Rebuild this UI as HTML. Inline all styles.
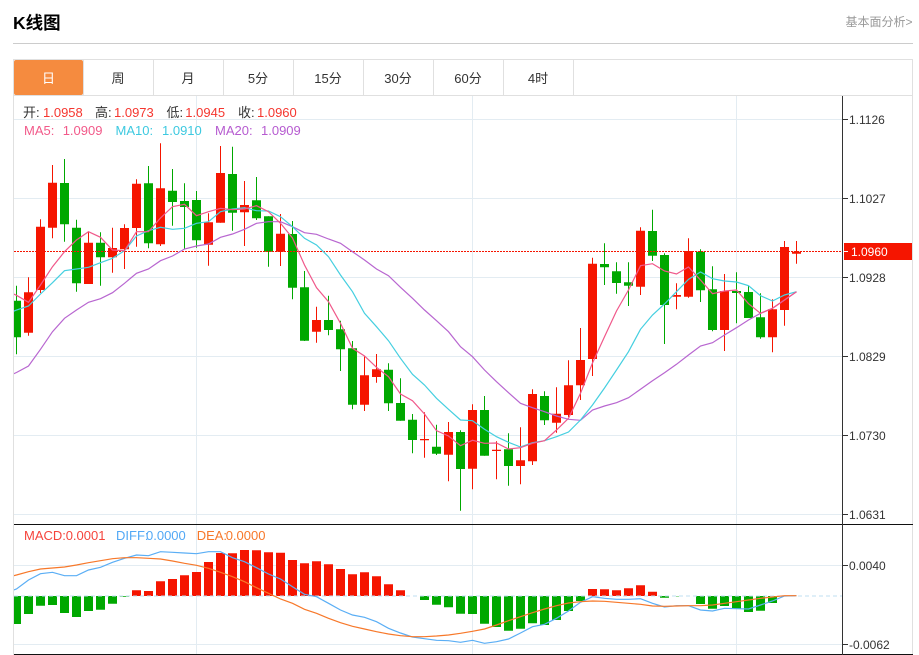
<!DOCTYPE html>
<html lang="zh">
<head>
<meta charset="utf-8">
<title>K线图</title>
<style>
html,body{margin:0;padding:0;background:#fff;width:919px;height:655px;overflow:hidden}
svg{display:block;position:absolute;left:0;top:0}
text{font-family:"Liberation Sans","Noto Sans CJK SC",sans-serif;white-space:pre}
</style>
</head>
<body>
<svg width="919" height="655" viewBox="0 0 919 655" xmlns="http://www.w3.org/2000/svg">
<defs>
<clipPath id="c"><rect x="14" y="96" width="828" height="428"/></clipPath>
<clipPath id="m"><rect x="14" y="525" width="828" height="129"/></clipPath>
</defs>
<!-- header -->
<text x="13" y="29" font-size="17.5" font-weight="700" fill="#000">K线图</text>
<text x="845.5" y="26" font-size="12" fill="#999">基本面分析&gt;</text>
<path d="M13 43.5H913" stroke="#ccc" fill="none"/>
<!-- frame + tabs -->
<path d="M13.5 655V59.5H912.5V655M13.5 95.5H912.5" stroke="#e0e0e0" fill="none"/>
<path d="M83.5 60V95M153.5 60V95M223.5 60V95M293.5 60V95M363.5 60V95M433.5 60V95M503.5 60V95M573.5 60V95" stroke="#e0e0e0" fill="none"/>
<rect x="14" y="60" width="69" height="35" rx="2" fill="#f58b3f"/>
<g font-size="13" fill="#333" text-anchor="middle">
<text x="48.5" y="83" fill="#fff">日</text>
<text x="118" y="83">周</text>
<text x="188" y="83">月</text>
<text x="258" y="83">5分</text>
<text x="328" y="83">15分</text>
<text x="398" y="83">30分</text>
<text x="468" y="83">60分</text>
<text x="538" y="83">4时</text>
</g>
<!-- grid -->
<path d="M14 119.5H842M14 198.5H842M14 277.5H842M14 356.5H842M14 435.5H842M14 514.5H842M14 565.5H842M14 644.5H842M196.5 96V654M472.5 96V654M736.5 96V654" stroke="#e3ecf2" fill="none"/>
<!-- candles -->
<g clip-path="url(#c)">
<path stroke="#00a800" fill="none" d="M16.5 285.7V354.3M64.5 159V241.7M76.5 219.7V291.7M100.5 232.3V285.7M148.5 166V248.3M172.5 169V225.7M184.5 183.3V249.3M196.5 191V247.7M232.5 146.7V230.7M256.5 177V220M268.5 216.3V266.7M292.5 221V299.3M304.5 271V341M328.5 295.7V335.3M340.5 320.7V371M352.5 341V409.3M388.5 363.3V411M400.5 378.3V420.7M412.5 414V453.3M436.5 424.7V455M460.5 430.3V510.7M484.5 396V455.7M508.5 433.3V485.7M544.5 391.3V425M604.5 243.3V285M616.5 262.3V293.7M628.5 262.3V306M652.5 209.7V261M664.5 253.3V344M700.5 249.3V302M712.5 266.3V331.3M736.5 272.3V323.3M748.5 286V318M760.5 293.3V338.7"/>
<path fill="#00a800" d="M12 300.7H21V337.3H12zM60 183H69V224.3H60zM72 227.7H81V283.3H72zM96 242.7H105V257.3H96zM144 183.3H153V243.3H144zM168 190.7H177V202H168zM180 201H189V207H180zM192 200H201V240.3H192zM228 174H237V212.7H228zM252 200.3H261V218.3H252zM264 216.3H273V251.7H264zM288 234H297V287.7H288zM300 287.3H309V340.7H300zM324 320H333V330H324zM336 329.3H345V349.3H336zM348 348.3H357V404.7H348zM384 369.7H393V403.3H384zM396 403H405V420.7H396zM408 419.7H417V440H408zM432 446.7H441V453.7H432zM456 432H465V469H456zM480 410H489V455.7H480zM504 449.3H513V466H504zM540 396H549V420.3H540zM600 264H609V267.3H600zM612 271.3H621V283H612zM624 282.3H633V285.7H624zM648 231H657V255.7H648zM660 255H669V305H660zM696 251.7H705V290.3H696zM708 289.3H717V330H708zM732 291H741V293H732zM744 292H753V318H744zM756 317.3H765V337.3H756z"/>
<path stroke="#f51500" fill="none" d="M28.5 277.3V335.7M40.5 219.3V293M52.5 165V238.3M88.5 231.7V284M112.5 227.7V272.7M124.5 224.3V269M136.5 179.3V246.7M160.5 143.3V246M208.5 213.3V265.7M220.5 146V222.7M244.5 181V246M280.5 214V266M316.5 306.7V342.7M364.5 356V411M376.5 354V382.7M424.5 412.3V457.7M448.5 422V481.3M472.5 404.3V489.3M496.5 441.3V479.3M520.5 427.3V484.3M532.5 389.3V465M556.5 387.3V432.7M568.5 360.3V417M580.5 328V400M592.5 257.7V376M640.5 227.3V295M676.5 283.3V309.3M688.5 238.3V297.7M724.5 274V351M772.5 299.3V352.3M784.5 241V325.7M796.5 241V263.7"/>
<path fill="#f51500" d="M24 292.3H33V332.7H24zM36 226.7H45V290H36zM48 182.7H57V227.7H48zM84 242.7H93V284H84zM108 248H117V257.3H108zM120 228H129V249.3H120zM132 183.7H141V228H132zM156 188.3H165V244.3H156zM204 222.3H213V244.7H204zM216 173H225V222.7H216zM240 205H249V212.3H240zM276 233.7H285V251.7H276zM312 320H321V331.7H312zM360 375.3H369V404.7H360zM372 369.3H381V377H372zM420 439H429V440.3H420zM444 432H453V454.7H444zM468 410H477V468.7H468zM492 449.7H501V451H492zM516 460.3H525V466H516zM528 394H537V461.3H528zM552 413.7H561V422.7H552zM564 385.3H573V415H564zM576 360H585V385.3H576zM588 263.7H597V359H588zM636 230.7H645V286.7H636zM672 295H681V296.7H672zM684 251H693V296.7H684zM720 291H729V330H720zM768 309.3H777V337.3H768zM780 247H789V310H780zM792 251.7H801V253.7H792z"/>
<!-- current price line -->
<path d="M14 251.5H842" stroke="#f51500" stroke-dasharray="2 1" fill="none"/>
<!-- MA lines -->
<polyline fill="none" stroke="#b866d0" stroke-width="1.2" points="4.5,378 16.5,372.5 28.5,366 40.5,349.3 52.5,331.7 64.5,318.3 76.5,310 88.5,302.3 100.5,298.7 112.5,292.7 124.5,283.3 136.5,273.3 148.5,269 160.5,260.7 172.5,256 184.5,249 196.5,246 208.5,244 220.5,237.3 232.5,234 244.5,229.3 256.5,223.3 268.5,221.7 280.5,221.7 292.5,226.7 304.5,232.7 316.5,234.3 328.5,239 340.5,243.3 352.5,251.7 364.5,260 376.5,269 388.5,275.7 400.5,287.3 412.5,298.3 424.5,310 436.5,320.7 448.5,331.7 460.5,346.7 472.5,356.7 484.5,370 496.5,381.7 508.5,392.7 520.5,403.3 532.5,407.7 544.5,411.7 556.5,416 568.5,419.3 580.5,420.3 592.5,410 604.5,406 616.5,402.7 628.5,397.7 640.5,389.3 652.5,380.7 664.5,372.7 676.5,364.3 688.5,355 700.5,346 712.5,342.7 724.5,335 736.5,327.7 748.5,320 760.5,313.3 772.5,308.3 784.5,300 796.5,291.7"/>
<polyline fill="none" stroke="#45cfe0" stroke-width="1.2" points="4.5,315 16.5,310 28.5,306 40.5,294 52.5,282.7 64.5,270.7 76.5,269 88.5,267.3 100.5,262.7 112.5,258.3 124.5,250.7 136.5,236 148.5,230.7 160.5,227.3 172.5,229.3 184.5,228.3 196.5,223.3 208.5,221.7 220.5,211.7 232.5,209 244.5,207.7 256.5,210.7 268.5,211 280.5,216.7 292.5,226.7 304.5,238.3 316.5,245 328.5,256.7 340.5,275 352.5,291.7 364.5,313.3 376.5,326.7 388.5,340.7 400.5,358.3 412.5,374.3 424.5,385 436.5,398.3 448.5,409.3 460.5,420 472.5,420.7 484.5,429.3 496.5,436.7 508.5,442.3 520.5,447 532.5,442.7 544.5,440.7 556.5,436.7 568.5,432 580.5,420 592.5,405 604.5,388 616.5,370 628.5,351.7 640.5,329.3 652.5,315 664.5,304 676.5,291.7 688.5,279.3 700.5,272 712.5,278.7 724.5,281 736.5,282 748.5,285.7 760.5,295.7 772.5,301 784.5,295 796.5,291.7"/>
<polyline fill="none" stroke="#f0588a" stroke-width="1.2" points="4.5,290 16.5,295.3 28.5,302.3 40.5,285 52.5,266.7 64.5,251.7 76.5,240 88.5,231.7 100.5,237.3 112.5,250 124.5,250.7 136.5,231.7 148.5,231.7 160.5,218 172.5,206.7 184.5,204.3 196.5,215.7 208.5,211.7 220.5,208.3 232.5,209.7 244.5,209 256.5,205.7 268.5,211.7 280.5,223.3 292.5,238 304.5,265 316.5,287.7 328.5,301.7 340.5,323.3 352.5,348.3 364.5,356 376.5,367.3 388.5,376.7 400.5,394 412.5,400.7 424.5,414 436.5,430.7 448.5,436 460.5,445.7 472.5,440.3 484.5,443.3 496.5,443 508.5,449 520.5,447.7 532.5,443.3 544.5,440.7 556.5,430 568.5,418.3 580.5,393.3 592.5,363 604.5,336.7 616.5,311 628.5,290 640.5,265.7 652.5,263.7 664.5,271 676.5,274 688.5,267 700.5,280 712.5,293.7 724.5,291 736.5,290 748.5,303.7 760.5,313.3 772.5,308.3 784.5,300 796.5,291.7"/>
</g>
<!-- MACD -->
<g clip-path="url(#m)">
<path fill="#00a800" d="M12 596H21V624H12zM24 596H33V614H24zM36 596H45V605.7H36zM48 596H57V605H48zM60 596H69V613H60zM72 596H81V617H72zM84 596H93V611H84zM96 596H105V609.7H96zM108 596H117V603.7H108zM120 596H129V596.7H120zM420 596H429V600H420zM432 596H441V604.7H432zM444 596H453V607.3H444zM456 596H465V613.7H456zM468 596H477V614H468zM480 596H489V623.7H480zM492 596H501V627H492zM504 596H513V630.7H504zM516 596H525V628.7H516zM528 596H537V623.3H528zM540 596H549V625H540zM552 596H561V620H552zM564 596H573V611H564zM576 596H585V601H576zM660 596H669V597.7H660zM672 596H681V596.4H672zM696 596H705V604H696zM708 596H717V608.7H708zM720 596H729V606H720zM732 596H741V608.7H732zM744 596H753V612H744zM756 596H765V610.7H756zM768 596H777V603H768z"/>
<path fill="#f51500" d="M132 590.3H141V596H132zM144 591H153V596H144zM156 581.3H165V596H156zM168 579H177V596H168zM180 575.3H189V596H180zM192 572H201V596H192zM204 562H213V596H204zM216 553H225V596H216zM228 553.3H237V596H228zM240 550H249V596H240zM252 550.3H261V596H252zM264 552.3H273V596H264zM276 552.7H285V596H276zM288 560H297V596H288zM300 563.3H309V596H300zM312 561.3H321V596H312zM324 564.3H333V596H324zM336 569H345V596H336zM348 574.3H357V596H348zM360 572.3H369V596H360zM372 576.3H381V596H372zM384 584.3H393V596H384zM396 590.3H405V596H396zM588 589H597V596H588zM600 589.3H609V596H600zM612 590.3H621V596H612zM624 588.3H633V596H624zM636 585.3H645V596H636zM648 591.7H657V596H648z"/>
<path d="M14 596H842" stroke="#bfdff2" stroke-width="1" stroke-dasharray="4 3" fill="none"/>
<polyline fill="none" stroke="#5aaef5" stroke-width="1.2" points="4.5,593 16.5,589 28.5,580 40.5,573.7 52.5,572.3 64.5,575.7 76.5,575.7 88.5,570 100.5,567.3 112.5,562.3 124.5,558.3 136.5,555 148.5,555.7 160.5,551.7 172.5,552.3 184.5,553 196.5,553.7 208.5,551.7 220.5,551.7 232.5,557.7 244.5,561.7 256.5,567.7 268.5,574 280.5,579 292.5,586.7 304.5,594.3 316.5,596.7 328.5,603.3 340.5,610 352.5,615 364.5,617.3 376.5,621.7 388.5,628.3 400.5,633 412.5,637 424.5,638.7 436.5,640.3 448.5,640.7 460.5,642.3 472.5,640.3 484.5,643.3 496.5,641.7 508.5,639 520.5,633 532.5,626.7 544.5,624.3 556.5,618.3 568.5,611 580.5,602.3 592.5,596.7 604.5,598.3 616.5,599.3 628.5,599.3 640.5,598.7 652.5,603.3 664.5,607 676.5,605.7 688.5,605.7 700.5,610 712.5,611 724.5,608.3 736.5,608.7 748.5,609 760.5,605 772.5,601 784.5,596 796.5,595.7"/>
<polyline fill="none" stroke="#f7782a" stroke-width="1.2" points="4.5,578 16.5,575 28.5,571.7 40.5,569 52.5,568 64.5,567 76.5,565 88.5,562.7 100.5,560.7 112.5,558.7 124.5,557.7 136.5,557.7 148.5,558.3 160.5,559 172.5,561 184.5,563.3 196.5,565.3 208.5,568.3 220.5,572.3 232.5,576.7 244.5,581.7 256.5,587.7 268.5,593.3 280.5,599 292.5,603.3 304.5,609.3 316.5,613.3 328.5,618.3 340.5,622.7 352.5,626.3 364.5,629 376.5,631.7 388.5,634 400.5,635.7 412.5,636.7 424.5,636.7 436.5,636 448.5,635 460.5,633.3 472.5,631.3 484.5,629 496.5,625 508.5,620.7 520.5,616.7 532.5,612.7 544.5,609 556.5,605.7 568.5,603 580.5,601.7 592.5,601 604.5,601.3 616.5,602.3 628.5,603.3 640.5,604.3 652.5,606 664.5,606.3 676.5,606 688.5,605.7 700.5,605.7 712.5,605 724.5,603.3 736.5,601.7 748.5,600 760.5,598.3 772.5,597 784.5,595.7 796.5,595.7"/>
</g>
<!-- axes -->
<path d="M14 524.5H913M14 654.5H913" stroke="#111" fill="none"/>
<path d="M842.5 96V655" stroke="#333" fill="none"/>
<path d="M843 119.5H848M843 198.5H848M843 277.5H848M843 356.5H848M843 435.5H848M843 514.5H848M843 565.5H848M843 644.5H848" stroke="#333" fill="none"/>
<g font-size="12" fill="#333">
<text x="849" y="124">1.1126</text>
<text x="849" y="203">1.1027</text>
<text x="849" y="282">1.0928</text>
<text x="849" y="361">1.0829</text>
<text x="849" y="440">1.0730</text>
<text x="849" y="519">1.0631</text>
<text x="849" y="570">0.0040</text>
<text x="849" y="649">-0.0062</text>
</g>
<rect x="844" y="243" width="68" height="17" fill="#f51500"/>
<path d="M844 251.5H848" stroke="#fff" fill="none"/>
<text x="851" y="256" font-size="12" fill="#fff">1.0960</text>
<!-- legends -->
<g font-size="13">
<text x="23" y="117" fill="#333">开:</text><text x="43" y="117" fill="#f5362f">1.0958</text>
<text x="95" y="117" fill="#333">高:</text><text x="114" y="117" fill="#f5362f">1.0973</text>
<text x="166.5" y="117" fill="#333">低:</text><text x="185.3" y="117" fill="#f5362f">1.0945</text>
<text x="238" y="117" fill="#333">收:</text><text x="257" y="117" fill="#f5362f">1.0960</text>
<text x="24" y="135" fill="#f25a8a">MA5:</text><text x="62.7" y="135" fill="#f25a8a">1.0909</text>
<text x="115.5" y="135" fill="#3dc9e0">MA10:</text><text x="162" y="135" fill="#3dc9e0">1.0910</text>
<text x="215" y="135" fill="#b65bd0">MA20:</text><text x="261" y="135" fill="#b65bd0">1.0909</text>
<text x="24" y="540" fill="#f5443c">MACD:</text><text x="65.7" y="540" fill="#f5443c">0.0001</text>
<text x="116" y="540" fill="#52a8f5">DIFF:</text><text x="146" y="540" fill="#52a8f5">0.0000</text>
<text x="196.7" y="540" fill="#f7782a">DEA:</text><text x="225.7" y="540" fill="#f7782a">0.0000</text>
</g>
</svg>
</body>
</html>
